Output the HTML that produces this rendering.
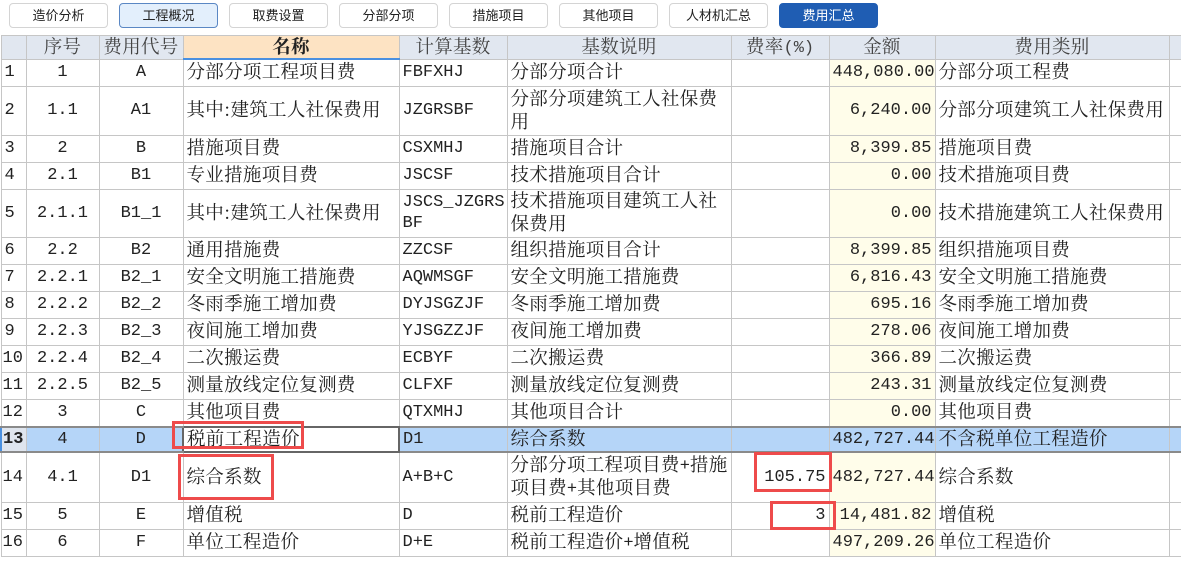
<!DOCTYPE html>
<html><head><meta charset="utf-8"><style>
*{box-sizing:border-box;margin:0;padding:0}
body{width:1181px;height:578px;background:#fff;position:relative;overflow:hidden;font-family:"Liberation Mono","Noto Serif CJK SC",serif;}
.btn{position:absolute;top:3px;height:25px;width:99px;border:1px solid #d4d4d4;border-radius:4px;background:#fff;font:13px "Liberation Sans","Noto Sans CJK SC",sans-serif;color:#222;text-align:center;line-height:23px}
.sel{background:#e3effc;border-color:#5a87c4}
.act{background:#1f5db3;border-color:#1f5db3;color:#fff}
table{position:absolute;left:0;top:35px;width:1181px;border-collapse:collapse;table-layout:fixed;font-size:17px;color:#222}
td{border:1px solid #c6c6c6;padding:0 3px;white-space:nowrap;overflow:hidden;line-height:21px}
th{border:1px solid #c6c6c6;background:#e1e7f0;font-weight:normal;color:#444;height:21px;line-height:18px;font-size:17px;overflow:hidden;white-space:nowrap}
th.nm{background:#fde3c3;font-weight:bold;color:#222;border-bottom:2px solid #4a90e0}
.c{text-align:center}.r{text-align:right}
.amt{background:#fffdea}
tr.s13 td{background:#b5d5f8;border-top:2px solid #8a8a8a;border-bottom:2px solid #8a8a8a}
tr.s13 td.cur{background:#fff;border:2px solid #666}
tr.s13 td.rn{background:#dfe5ee;font-weight:bold;border-left:2px solid #4a90e0}
td.w{white-space:normal}
k{font-family:"Noto Serif CJK SC",serif;font-size:18.5px;position:relative;top:1px;letter-spacing:0.3px;line-height:1}
.box{position:absolute;border:3px solid #ee4b4b}
</style></head><body>
<div class="btn" style="left:9px">造价分析</div>
<div class="btn sel" style="left:119px">工程概况</div>
<div class="btn" style="left:229px">取费设置</div>
<div class="btn" style="left:339px">分部分项</div>
<div class="btn" style="left:449px">措施项目</div>
<div class="btn" style="left:559px">其他项目</div>
<div class="btn" style="left:669px">人材机汇总</div>
<div class="btn act" style="left:779px">费用汇总</div>
<table>
<colgroup><col style="width:25px"><col style="width:73px"><col style="width:84px"><col style="width:216px"><col style="width:108px"><col style="width:224px"><col style="width:98px"><col style="width:106px"><col style="width:234px"><col style="width:13px"></colgroup>
<tr><th></th><th><k>序号</k></th><th><k>费用代号</k></th><th class="nm"><k>名称</k></th><th><k>计算基数</k></th><th><k>基数说明</k></th><th><k>费率</k>(%)</th><th><k>金额</k></th><th><k>费用类别</k></th><th></th></tr>
<tr style="height:27px"><td>1</td><td class="c">1</td><td class="c">A</td><td><k>分部分项工程项目费</k></td><td>FBFXHJ</td><td><k>分部分项合计</k></td><td></td><td class="r amt">448,080.00</td><td><k>分部分项工程费</k></td><td></td></tr>
<tr style="height:49px"><td>2</td><td class="c">1.1</td><td class="c">A1</td><td><k>其中:建筑工人社保费用</k></td><td>JZGRSBF</td><td class="w"><k>分部分项建筑工人社保费<br>用</k></td><td></td><td class="r amt">6,240.00</td><td><k>分部分项建筑工人社保费用</k></td><td></td></tr>
<tr style="height:27px"><td>3</td><td class="c">2</td><td class="c">B</td><td><k>措施项目费</k></td><td>CSXMHJ</td><td><k>措施项目合计</k></td><td></td><td class="r amt">8,399.85</td><td><k>措施项目费</k></td><td></td></tr>
<tr style="height:27px"><td>4</td><td class="c">2.1</td><td class="c">B1</td><td><k>专业措施项目费</k></td><td>JSCSF</td><td><k>技术措施项目合计</k></td><td></td><td class="r amt">0.00</td><td><k>技术措施项目费</k></td><td></td></tr>
<tr style="height:48px"><td>5</td><td class="c">2.1.1</td><td class="c">B1_1</td><td><k>其中:建筑工人社保费用</k></td><td class="w">JSCS_JZGRS<br>BF</td><td class="w"><k>技术措施项目建筑工人社<br>保费用</k></td><td></td><td class="r amt">0.00</td><td><k>技术措施建筑工人社保费用</k></td><td></td></tr>
<tr style="height:27px"><td>6</td><td class="c">2.2</td><td class="c">B2</td><td><k>通用措施费</k></td><td>ZZCSF</td><td><k>组织措施项目合计</k></td><td></td><td class="r amt">8,399.85</td><td><k>组织措施项目费</k></td><td></td></tr>
<tr style="height:27px"><td>7</td><td class="c">2.2.1</td><td class="c">B2_1</td><td><k>安全文明施工措施费</k></td><td>AQWMSGF</td><td><k>安全文明施工措施费</k></td><td></td><td class="r amt">6,816.43</td><td><k>安全文明施工措施费</k></td><td></td></tr>
<tr style="height:27px"><td>8</td><td class="c">2.2.2</td><td class="c">B2_2</td><td><k>冬雨季施工增加费</k></td><td>DYJSGZJF</td><td><k>冬雨季施工增加费</k></td><td></td><td class="r amt">695.16</td><td><k>冬雨季施工增加费</k></td><td></td></tr>
<tr style="height:27px"><td>9</td><td class="c">2.2.3</td><td class="c">B2_3</td><td><k>夜间施工增加费</k></td><td>YJSGZZJF</td><td><k>夜间施工增加费</k></td><td></td><td class="r amt">278.06</td><td><k>夜间施工增加费</k></td><td></td></tr>
<tr style="height:27px"><td style="padding:0 1px">10</td><td class="c">2.2.4</td><td class="c">B2_4</td><td><k>二次搬运费</k></td><td>ECBYF</td><td><k>二次搬运费</k></td><td></td><td class="r amt">366.89</td><td><k>二次搬运费</k></td><td></td></tr>
<tr style="height:27px"><td style="padding:0 1px">11</td><td class="c">2.2.5</td><td class="c">B2_5</td><td><k>测量放线定位复测费</k></td><td>CLFXF</td><td><k>测量放线定位复测费</k></td><td></td><td class="r amt">243.31</td><td><k>测量放线定位复测费</k></td><td></td></tr>
<tr style="height:28px"><td style="padding:0 1px">12</td><td class="c">3</td><td class="c">C</td><td><k>其他项目费</k></td><td>QTXMHJ</td><td><k>其他项目合计</k></td><td></td><td class="r amt">0.00</td><td><k>其他项目费</k></td><td></td></tr>
<tr class="s13" style="height:25px"><td class="rn" style="padding:0 1px">13</td><td class="c">4</td><td class="c">D</td><td class="cur"><k>税前工程造价</k></td><td>D1</td><td><k>综合系数</k></td><td></td><td class="r">482,727.44</td><td><k>不含税单位工程造价</k></td><td></td></tr>
<tr style="height:50px"><td style="padding:0 1px">14</td><td class="c">4.1</td><td class="c">D1</td><td><k>综合系数</k></td><td>A+B+C</td><td class="w"><k>分部分项工程项目费</k>+<k>措施<br>项目费</k>+<k>其他项目费</k></td><td class="r">105.75</td><td class="r amt">482,727.44</td><td><k>综合系数</k></td><td></td></tr>
<tr style="height:27px"><td style="padding:0 1px">15</td><td class="c">5</td><td class="c">E</td><td><k>增值税</k></td><td>D</td><td><k>税前工程造价</k></td><td class="r">3</td><td class="r amt">14,481.82</td><td><k>增值税</k></td><td></td></tr>
<tr style="height:27px"><td style="padding:0 1px">16</td><td class="c">6</td><td class="c">F</td><td><k>单位工程造价</k></td><td>D+E</td><td><k>税前工程造价</k>+<k>增值税</k></td><td></td><td class="r amt">497,209.26</td><td><k>单位工程造价</k></td><td></td></tr>
</table>
<div class="box" style="left:172px;top:421px;width:132px;height:28px"></div>
<div class="box" style="left:178px;top:454px;width:96px;height:46px"></div>
<div class="box" style="left:754px;top:452px;width:78px;height:40px"></div>
<div class="box" style="left:770px;top:501px;width:66px;height:29px"></div>
</body></html>
